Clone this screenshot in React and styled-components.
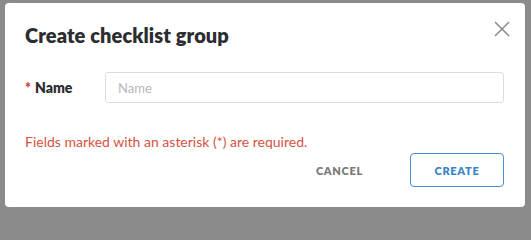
import React from 'react'
import styled, { createGlobalStyle } from 'styled-components'

const GlobalStyle = createGlobalStyle`
  html, body {
    margin: 0;
    background: #8b8b8b;
  }
  body {
    font-family: Lato, 'Liberation Sans', sans-serif;
  }
`

const Backdrop = styled.div`
  padding: 3px 6px 0 5px;
  height: 214px;
  box-sizing: border-box;
`

const Dialog = styled.div`
  width: 520px;
  height: 204px;
  box-sizing: border-box;
  background: #fff;
  border-radius: 4px;
  display: flex;
  flex-direction: column;
  padding: 0 21px 20px 20px;
`

const Header = styled.div`
  display: flex;
  justify-content: space-between;
  align-items: center;
  height: 62px;
  padding-top: 2px;
  box-sizing: border-box;
`

const Title = styled.h2`
  margin: 0;
  font-size: 20px;
  font-weight: 800;
  color: #2b2d31;
  letter-spacing: 0.1px;
`

const CloseButton = styled.button`
  border: 0;
  background: none;
  padding: 0;
  margin-right: -7px;
  margin-top: -12px;
  width: 18px;
  height: 18px;
  cursor: pointer;
  display: flex;
`

const Field = styled.div`
  display: flex;
  align-items: center;
  height: 31px;
  margin-top: 7px;
`

const Label = styled.label`
  width: 80px;
  flex: none;
  font-size: 14px;
  font-weight: 800;
  color: #2b2d31;
`

const Required = styled.span`
  color: #d0443a;
  margin-right: 4px;
`

const Input = styled.input`
  flex: 1;
  height: 31px;
  box-sizing: border-box;
  border: 1px solid #dcdcdc;
  border-radius: 3px;
  padding: 0 12px;
  font-family: inherit;
  font-size: 13px;
  color: #333;
  outline: none;
  &::placeholder {
    color: #b8b8b8;
  }
`

const Hint = styled.p`
  margin: 30px 0 0;
  font-size: 14px;
  color: #d4533f;
`

const Footer = styled.div`
  margin-top: auto;
  display: flex;
  justify-content: flex-end;
  align-items: center;
  gap: 47px;
`

const ActionButton = styled.button`
  font-family: inherit;
  font-size: 11px;
  font-weight: 800;
  letter-spacing: 0.7px;
  background: #fff;
  cursor: pointer;
  color: ${p => (p.$primary ? '#3a86c8' : '#7a7a7a')};
  border: ${p => (p.$primary ? '1px solid #4a8fcb' : '0')};
  border-radius: 4px;
  width: ${p => (p.$primary ? '94px' : 'auto')};
  height: 34px;
  padding: 0;
`

export default function App() {
  return (
    <>
      <GlobalStyle />
      <Backdrop>
        <Dialog>
          <Header>
            <Title>Create checklist group</Title>
            <CloseButton aria-label="Close">
              <svg width="18" height="18" viewBox="0 0 18 18">
                <path d="M2 2 L16 16 M16 2 L2 16" stroke="#8a8a8a" strokeWidth="1.5" fill="none" />
              </svg>
            </CloseButton>
          </Header>
          <Field>
            <Label>
              <Required>*</Required>Name
            </Label>
            <Input placeholder="Name" />
          </Field>
          <Hint>Fields marked with an asterisk (*) are required.</Hint>
          <Footer>
            <ActionButton>CANCEL</ActionButton>
            <ActionButton $primary>CREATE</ActionButton>
          </Footer>
        </Dialog>
      </Backdrop>
    </>
  )
}
